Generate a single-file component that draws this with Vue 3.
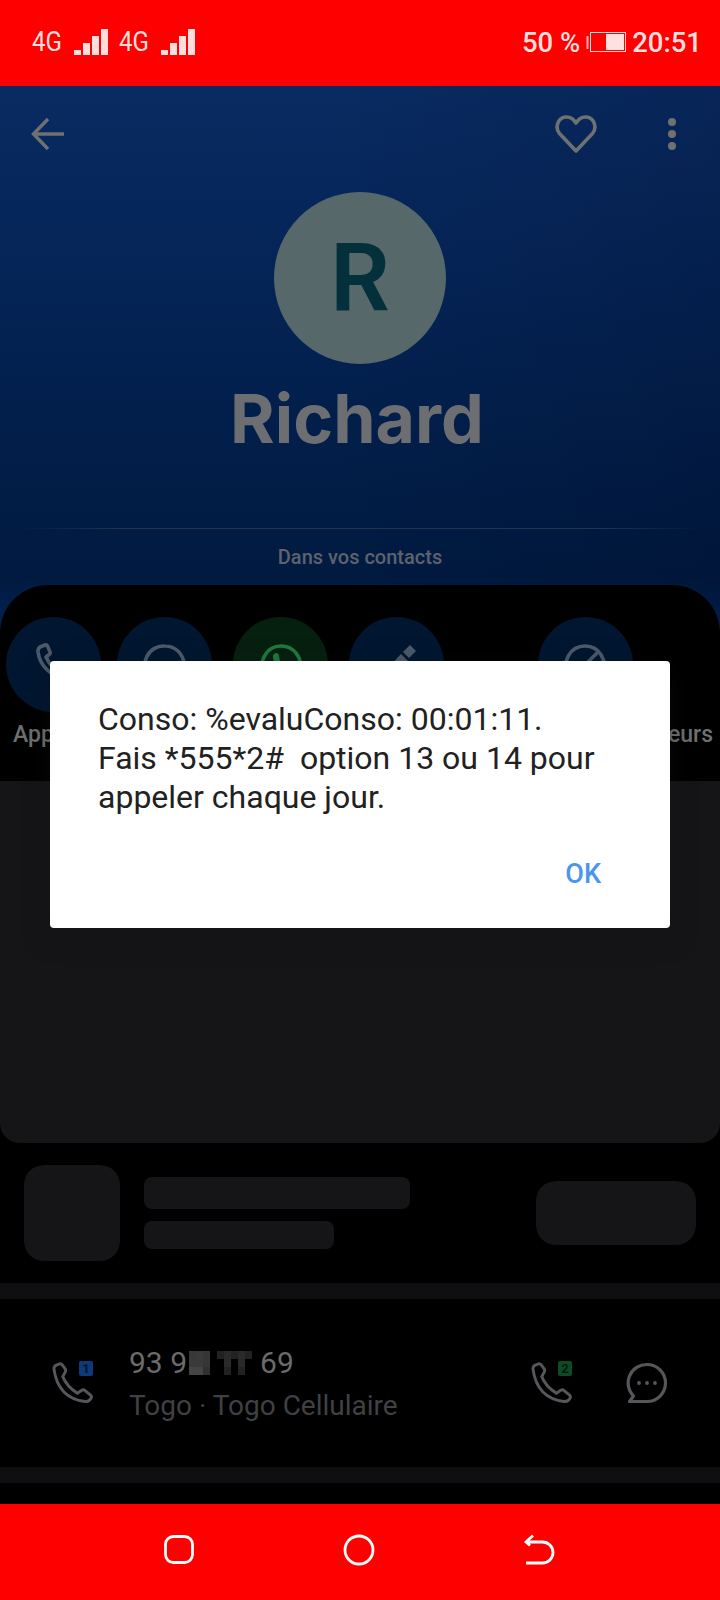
<template>
  <div class="screen">
    <header class="status-bar">
      <div class="net" v-for="n in 2" :key="n">
        <span class="net-label">4G</span>
        <span class="bars">
          <i v-for="h in barHeights" :key="h" :style="{ height: h + 'px' }"></i>
        </span>
      </div>
      <span class="status-fill"></span>
      <span class="status-text">50 %</span>
      <svg class="battery" width="40" height="20" viewBox="0 0 40 20">
        <rect x="0.5" y="4" width="2" height="13" fill="#ffb0b0" />
        <rect x="4.5" y="0.5" width="35" height="19" fill="none" stroke="#ffd9d9" />
        <rect x="20" y="2" width="18" height="16" fill="#ffe0e0" />
      </svg>
      <span class="status-text">20:51</span>
    </header>

    <section class="contact">
      <div class="toolbar">
        <svg width="36" height="36" viewBox="0 0 36 36" fill="none" stroke="#6f7072" stroke-width="3.4">
          <path d="M34 18H4M18 3 3.500 18 18 33" />
        </svg>
        <span class="toolbar-fill"></span>
        <svg class="heart" width="44" height="40" viewBox="0 0 44 40" fill="none" stroke="#6f7072" stroke-width="3.6" stroke-linejoin="round">
          <path d="M22 37 5.500 19.500C1 14.500 3 4 11.500 3c4.500-.4 8 1.800 10.500 6 2.500-4.200 6-6.400 10.500-6C41 4 43 14.500 38.500 19.500Z" />
        </svg>
        <span class="dots"><i></i><i></i><i></i></span>
      </div>
      <div class="avatar">R</div>
      <h1 class="name">Richard</h1>
      <div class="rule"></div>
      <p class="in-contacts">Dans vos contacts</p>
    </section>

    <section class="panel">
      <div class="actions">
        <div class="action" v-for="a in actions" :key="a.cls" :class="a.cls">
          <span class="action-circle">
            <svg width="48" height="48" viewBox="0 0 48 48" fill="none" :stroke="a.stroke" stroke-width="3.6" stroke-linejoin="round">
              <path v-for="d in a.paths" :key="d" :d="d" />
              <path v-for="d in a.solid" :key="d" :d="d" :fill="a.stroke" stroke="none" />
            </svg>
          </span>
          <span v-if="a.label" class="action-label">{{ a.label }}</span>
        </div>
      </div>
    </section>

    <section class="empty-card"></section>

    <section class="placeholder-row">
      <div class="ph-thumb"></div>
      <div class="ph-lines">
        <div class="ph-line-a"></div>
        <div class="ph-line-b"></div>
      </div>
      <div class="ph-button"></div>
    </section>

    <div class="separator"></div>

    <section class="number-row">
      <div class="call-icon">
        <svg width="42" height="42" viewBox="-1 -1 43 43" fill="none" stroke="#55575a" stroke-width="3" stroke-linejoin="round">
          <path :d="phonePath" />
        </svg>
        <span class="sim sim-one">1</span>
      </div>
      <div class="number-text">
        <div class="number">
          <span>93 9</span><span class="mosaic"><i v-for="(c, i) in mosaic" :key="i" :style="{ background: c }"></i></span><span>69</span>
        </div>
        <div class="carrier">Togo · Togo Cellulaire</div>
      </div>
      <div class="call-icon call-two">
        <svg width="42" height="42" viewBox="-1 -1 43 43" fill="none" stroke="#55575a" stroke-width="3" stroke-linejoin="round">
          <path :d="phonePath" />
        </svg>
        <span class="sim sim-two">2</span>
      </div>
      <svg class="message" width="42" height="42" viewBox="0 0 42 42" fill="none">
        <path d="M21 2.500a18.500 18.500 0 1 1 0 37H3.500l4-5.500A18.500 18.500 0 0 1 21 2.500Z" stroke="#55575a" stroke-width="3.2" stroke-linejoin="round" />
        <circle cx="13" cy="21" r="1.900" fill="#55575a" />
        <circle cx="21" cy="21" r="1.900" fill="#55575a" />
        <circle cx="29" cy="21" r="1.900" fill="#55575a" />
      </svg>
    </section>

    <div class="separator"></div>
    <div class="bottom-gap"></div>

    <nav class="nav-bar">
      <svg width="34" height="34" viewBox="0 0 34 34" fill="none" stroke="#fff" stroke-width="2.800">
        <rect x="3.500" y="3.500" width="27" height="26" rx="8" />
      </svg>
      <svg width="34" height="34" viewBox="0 0 34 34" fill="none" stroke="#fff" stroke-width="2.800">
        <circle cx="17" cy="17" r="14" />
      </svg>
      <svg width="34" height="34" viewBox="0 0 34 34" fill="none" stroke="#fff" stroke-width="2.800">
        <path d="M4 30H20.500a10.500 10.500 0 0 0 0-21H4M11 2.500 4 9 8 12.500" />
      </svg>
    </nav>

    <div class="dialog">
      <p class="dialog-text">Conso: %evaluConso: 00:01:11.<br />Fais *555*2#&nbsp; option 13 ou 14 pour appeler chaque jour.</p>
      <div class="dialog-actions"><span class="ok">OK</span></div>
    </div>
  </div>
</template>

<script setup>
const barHeights = [5, 12, 19, 26]

const phonePath =
  'M1 6Q1 3 4 2L7 .8Q8.500 .5 9.500 2L12.500 6Q13.500 7.500 12.500 9.500L10 14Q14 24 25 31L29.500 28Q31 27 32.500 28L38.500 33Q40 34.500 39 36L37.500 38Q36 39.500 33 39.500Q5 36 1 6Z'

// pixelated part of the number, 9 x 3 cells
const mosaic = [
  '#383838', '#3a3a3a', '#363636', '#000', '#222', '#2a2a2a', '#222', '#2a2a2a', '#222',
  '#3a3a3a', '#3a3a3a', '#363636', '#000', '#000', '#2a2a2a', '#000', '#2a2a2a', '#000',
  '#444', '#444', '#303030', '#000', '#000', '#222', '#000', '#222', '#000',
]

const actions = [
  {
    label: 'Appeler',
    cls: 'a-call',
    stroke: '#4d5a6c',
    paths: ['M10 6 15 4c1-.4 2 0 2.500 1l2.500 6c.4 1 0 2-.8 2.500L16 16c2.500 6 8 11.500 14 14l2.500-3c.7-.8 1.700-1 2.700-.6l6 2.500c1 .5 1.400 1.500 1 2.500l-2 5c-.5 1-1.500 1.700-3 1.600C21 36 10 25 8 11c-.2-2 .7-4 2-5Z'],
  },
  {
    cls: 'a-msg',
    stroke: '#4d5a6c',
    paths: ['M24 5a19 19 0 1 1 0 38H5l4-6A19 19 0 0 1 24 5Z'],
  },
  {
    cls: 'a-wa',
    stroke: '#1f7a3c',
    paths: ['M24 5a19 19 0 1 1-10 35l-9 3 3-9A19 19 0 0 1 24 5Z'],
    solid: ['M17 13c2-2 5-1 5 2l1 5-5 1c-2-2-3-6-1-8Z'],
  },
  {
    cls: 'a-edit',
    stroke: '#4d5a6c',
    paths: [],
    solid: ['M37 4 43 10 36 17 30 11Z', 'M28 13 35 20 14 41 7 42 8 34Z'],
  },
  {
    label: 'Appeleurs',
    cls: 'a-block',
    stroke: '#4d5a6c',
    paths: ['M24 5a19 19 0 1 0 .01 0Z', 'M38 10 10 38'],
  },
]
</script>

<style>
html,
body {
  margin: 0;
  background: #000;
}
</style>

<style scoped>
.screen {
  position: relative;
  width: 720px;
  height: 1600px;
  overflow: hidden;
  display: flex;
  flex-direction: column;
  background: #000;
  font-family: Roboto, "Liberation Sans", sans-serif;
}

.status-bar {
  height: 86px;
  flex: none;
  display: flex;
  align-items: center;
  padding: 0 18px 0 32px;
  box-sizing: border-box;
  background: #f00;
  color: #ffdede;
}

.net {
  display: flex;
  align-items: flex-end;
  margin-right: 11px;
  height: 26px;
  position: relative;
  top: -1px;
}

.net-label {
  width: 42px;
  font-size: 28px;
  line-height: 26px;
  transform: scaleX(0.86);
  transform-origin: left center;
}

.bars {
  display: flex;
  align-items: flex-end;
  gap: 2px;
}

.bars i {
  display: block;
  width: 7px;
  background: #ffdede;
}

.status-fill {
  flex: 1;
}

.status-text {
  font-size: 27.5px;
  font-weight: 500;
  line-height: 30px;
}

.battery {
  margin: 0 6px 2px 6px;
}

.contact {
  height: 560px;
  margin-bottom: -61px;
  flex: none;
  box-sizing: border-box;
  padding-top: 28px;
  display: flex;
  flex-direction: column;
  align-items: center;
  background:
    linear-gradient(90deg, rgba(0, 0, 20, 0) 45%, rgba(0, 0, 20, 0.14) 100%),
    linear-gradient(180deg, #092b62 0%, #042456 35%, #011c45 74%, #011a40 88%, #02245a 100%);
}

.toolbar {
  width: 100%;
  box-sizing: border-box;
  padding: 0 44px 0 30px;
  height: 40px;
  display: flex;
  align-items: center;
}

.toolbar-fill {
  flex: 1;
}

.heart {
  margin-right: 70px;
}

.dots {
  display: flex;
  flex-direction: column;
  gap: 4px;
}

.dots i {
  width: 8px;
  height: 8px;
  border-radius: 50%;
  background: #6f7072;
}

.avatar {
  margin-top: 38px;
  width: 172px;
  height: 172px;
  border-radius: 50%;
  background: #56686a;
  color: #03303a;
  font-size: 94px;
  font-weight: 600;
  line-height: 172px;
  text-align: center;
}

.name {
  margin: 14px 6px 0 0;
  font-family: Inter, Roboto, sans-serif;
  font-size: 68px;
  font-weight: 700;
  line-height: 80px;
  color: #6d6e71;
}

.rule {
  width: 680px;
  height: 1px;
  margin-top: 70px;
  background: linear-gradient(90deg, transparent, #24344f 15%, #24344f 85%, transparent);
}

.in-contacts {
  margin: 16px 0 0;
  font-size: 20px;
  font-weight: 500;
  line-height: 24px;
  color: #5c636c;
}

.panel {
  position: relative;
  height: 196px;
  flex: none;
  border-radius: 48px 48px 0 0;
  background: #000;
  box-sizing: border-box;
  padding: 32px 0 0 6px;
}

.actions {
  display: flex;
}

.action {
  width: 95px;
  display: flex;
  flex-direction: column;
}

.a-call {
  margin-right: 16px;
}

.a-msg,
.a-wa {
  margin-right: 21px;
}

.a-edit {
  margin-right: 13px;
}

.a-block {
  width: 256px;
  align-items: center;
}

.action-circle {
  width: 95px;
  height: 95px;
  border-radius: 50%;
  background: #011630;
  display: flex;
  align-items: center;
  justify-content: center;
  flex: none;
}

.a-wa .action-circle {
  background: #06200f;
}

.action-label {
  margin-top: 9px;
  padding-left: 7px;
  font-size: 23px;
  font-weight: 500;
  line-height: 28px;
  color: #6f7072;
  white-space: nowrap;
}

.a-block .action-label {
  align-self: flex-end;
}

.empty-card {
  height: 362px;
  flex: none;
  background: #151517;
  border-radius: 0 0 20px 20px;
}

.placeholder-row {
  height: 140px;
  flex: none;
  display: flex;
  align-items: center;
  box-sizing: border-box;
  padding: 0 24px;
}

.ph-thumb {
  width: 96px;
  height: 96px;
  border-radius: 20px;
  background: #151517;
}

.ph-lines {
  flex: 1;
  margin-left: 24px;
  display: flex;
  flex-direction: column;
  gap: 12px;
}

.ph-line-a {
  width: 266px;
  height: 32px;
  border-radius: 8px;
  background: #151517;
}

.ph-line-b {
  width: 190px;
  height: 28px;
  border-radius: 8px;
  background: #151517;
}

.ph-button {
  width: 160px;
  height: 64px;
  border-radius: 20px;
  background: #151517;
}

.separator {
  height: 16px;
  flex: none;
  background: #0f0f11;
}

.number-row {
  height: 168px;
  flex: none;
  box-sizing: border-box;
  padding: 0 52px;
  display: flex;
  align-items: center;
}

.call-icon {
  position: relative;
  width: 42px;
  height: 42px;
  flex: none;
}

.sim {
  position: absolute;
  top: -1px;
  left: 27px;
  width: 14px;
  height: 15px;
  border-radius: 2px;
  font-size: 13px;
  font-weight: 700;
  line-height: 15px;
  text-align: center;
}

.sim-one {
  background: #0d3a7a;
  color: #04142c;
}

.sim-two {
  background: #0c4a28;
  color: #021a0c;
}

.number-text {
  flex: 1;
  margin-left: 35px;
  padding-top: 2px;
}

.number {
  display: flex;
  align-items: center;
  font-size: 30px;
  line-height: 34px;
  color: #6b6b6d;
}

.mosaic {
  width: 63px;
  height: 24px;
  margin: 0 8px 0 2px;
  display: grid;
  grid-template-columns: repeat(9, 1fr);
  grid-template-rows: repeat(3, 1fr);
}

.carrier {
  margin-top: 10px;
  font-size: 28px;
  line-height: 32px;
  color: #3f4145;
}

.message {
  margin-left: 53px;
  flex: none;
}

.bottom-gap {
  flex: 1;
}

.nav-bar {
  height: 96px;
  flex: none;
  background: #f00;
  display: flex;
  align-items: center;
  justify-content: center;
  gap: 146px;
  padding: 0 2px 4px 0;
  box-sizing: border-box;
}

.dialog {
  position: absolute;
  left: 50px;
  top: 661px;
  width: 620px;
  height: 267px;
  box-sizing: border-box;
  padding: 39px 48px 0;
  border-radius: 4px;
  background: #fff;
  box-shadow: 0 8px 28px rgba(20, 20, 20, 0.35);
}

.dialog-text {
  margin: 0;
  font-size: 32px;
  line-height: 39px;
  color: #212121;
}

.dialog-actions {
  margin-top: 39px;
  display: flex;
  justify-content: flex-end;
  padding-right: 21px;
}

.ok {
  font-size: 27px;
  font-weight: 500;
  line-height: 36px;
  color: #4a95ee;
}
</style>
